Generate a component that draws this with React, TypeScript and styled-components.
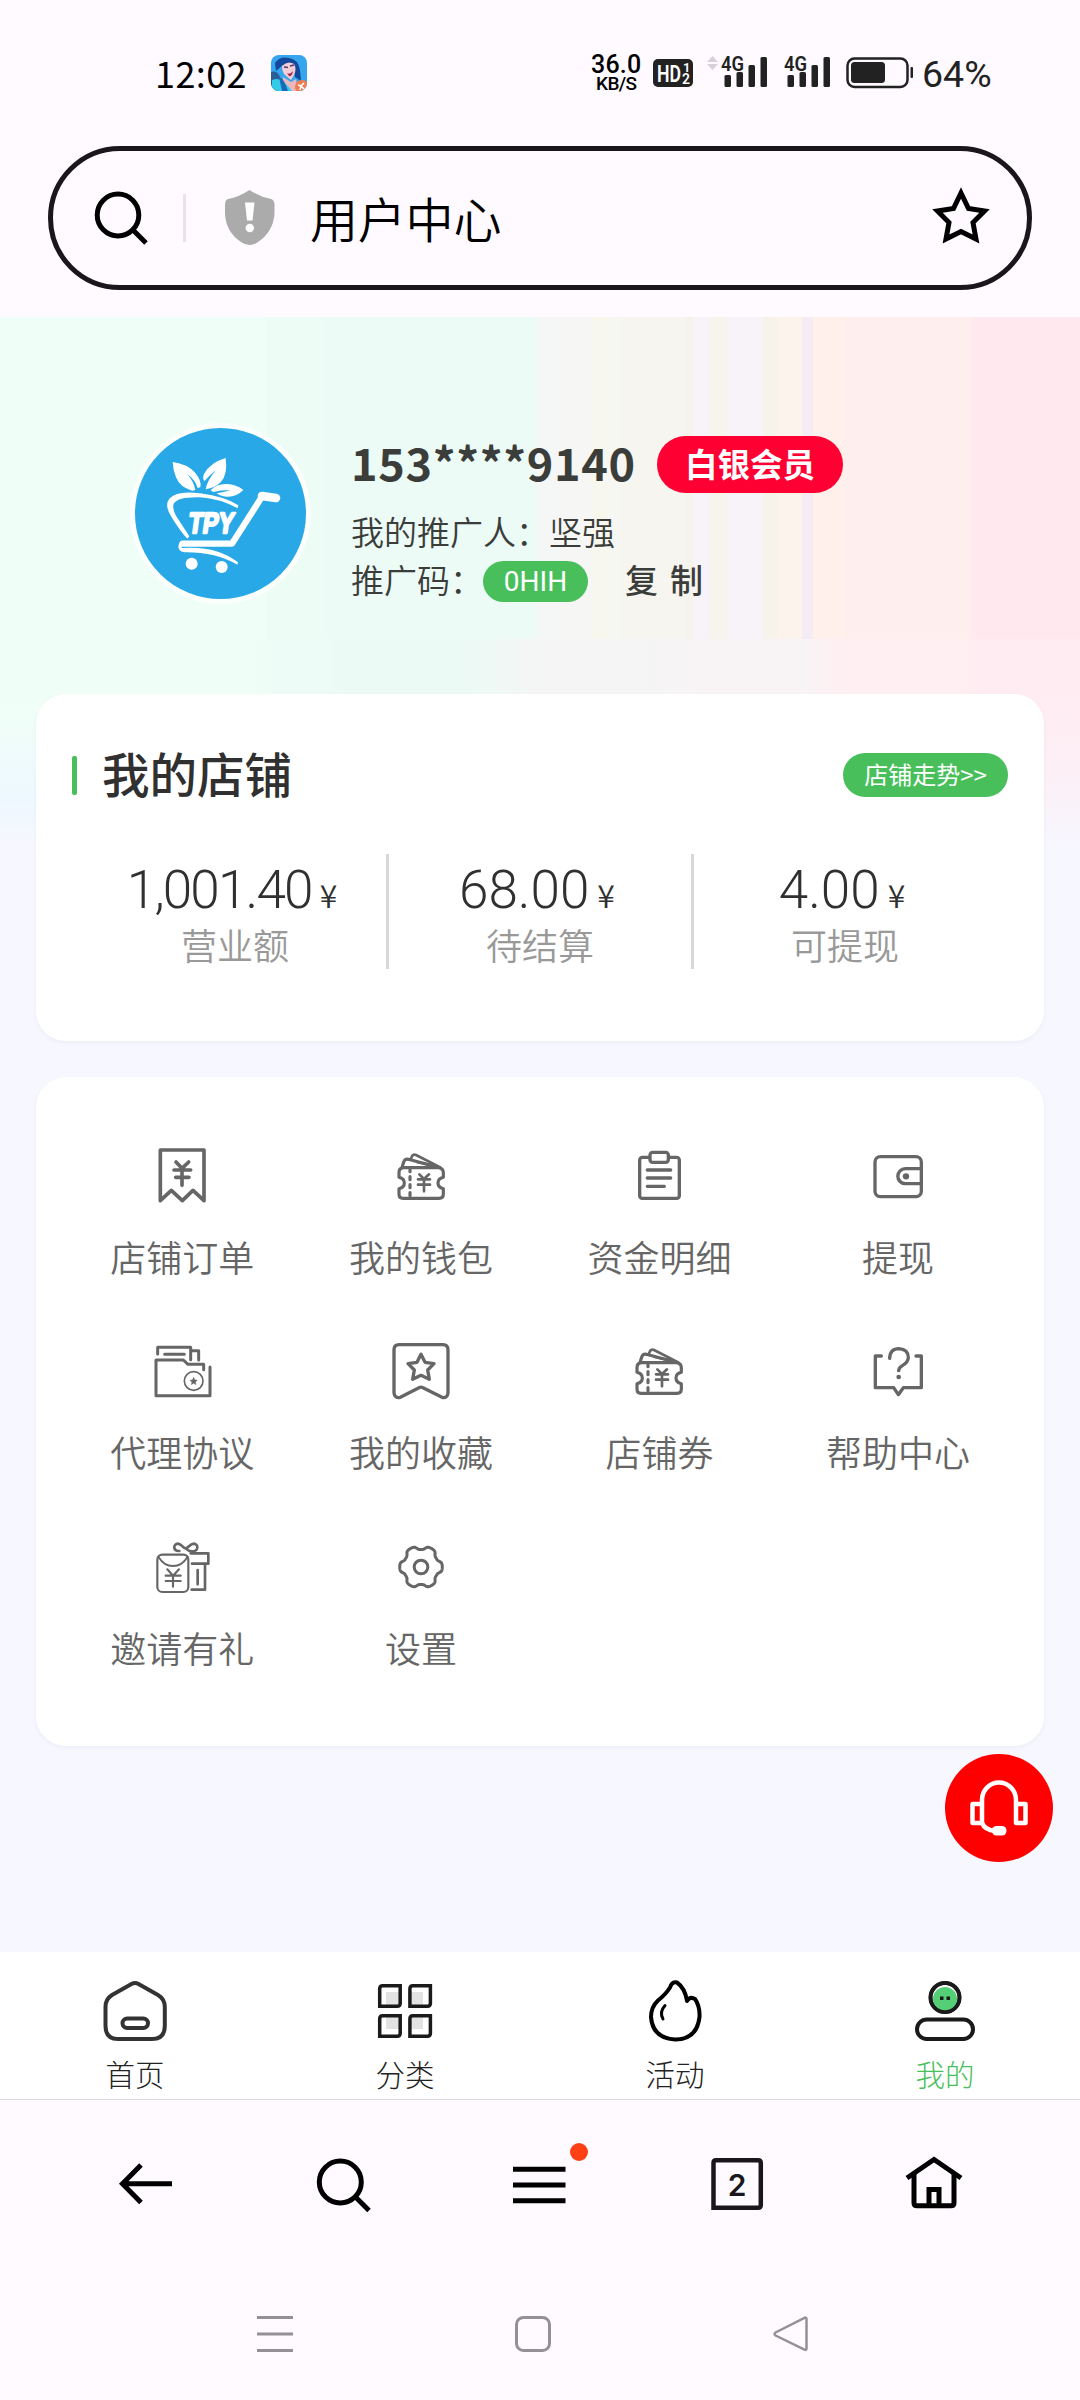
import React from "react";
import styled, { createGlobalStyle } from "styled-components";

const GREEN = "#48bf5b";
const CJK = '"Noto Sans CJK SC", "Noto Sans", sans-serif';
const LATIN = 'Roboto, "Noto Sans CJK SC", sans-serif';

const GlobalStyle = createGlobalStyle`
  * { box-sizing: border-box; }
  body { margin: 0; background: #fefaff; font-family: ${CJK}; }
  svg { display: block; overflow: visible; }
`;

const Screen = styled.div`
  width: 1080px;
  height: 2400px;
  display: flex;
  flex-direction: column;
  overflow: hidden;
  background: #fefaff;
`;

/* ---------- status bar ---------- */

const StatusBar = styled.header`
  height: 146px;
  padding: 0 88px 0 155px;
  display: flex;
  align-items: center;
`;

const Clock = styled.span`
  width: 116px;
  padding-bottom: 2px;
  font-size: 36px;
  font-weight: 400;
  line-height: 40px;
  letter-spacing: 0.4px;
  color: #000;
`;

const StatusCluster = styled.div`
  margin-left: auto;
  display: flex;
  align-items: center;
  color: #222;
`;

const NetSpeed = styled.div`
  width: 62px;
  font-family: ${LATIN};
  font-weight: 500;
  color: #000;
`;

const SpeedValue = styled.div`
  font-size: 25px;
  line-height: 20px;
  letter-spacing: 0.2px;
`;

const SpeedUnit = styled.div`
  padding-left: 5px;
  font-size: 19px;
  line-height: 17px;
  letter-spacing: -0.6px;
`;

const HdBadge = styled.div`
  width: 40px;
  height: 28px;
  margin-right: 12px;
  border-radius: 5px;
  background: #222;
`;

const Gap = styled.div<{ $w: number }>`
  width: ${(p) => p.$w}px;
`;

const Percent = styled.span`
  width: 70px;
  font-family: ${LATIN};
  font-size: 37.500px;
  line-height: 44px;
  color: #222;
  white-space: nowrap;
  padding-top: 2px;
`;

/* ---------- address bar ---------- */

const AddressBar = styled.div`
  width: 984px;
  height: 144px;
  margin: 0 48px 27px;
  padding: 0 34px 0 41px;
  flex: none;
  display: flex;
  align-items: center;
  border: 5px solid #19171c;
  border-radius: 72px;
`;

const BarDivider = styled.i`
  width: 3px;
  height: 48px;
  margin: 0 39px 0 35px;
  background: #e9e2e9;
`;

const PageTitle = styled.span`
  flex: 1;
  padding-left: 35px;
  padding-bottom: 3px;
  font-size: 48px;
  font-weight: 350;
  line-height: 56px;
  letter-spacing: -0.2px;
  color: #000;
`;

/* ---------- page content ---------- */

const Content = styled.main`
  position: relative;
  flex: 1;
  padding: 0 36px;
  background-color: #f7f7ff;
  background-repeat: no-repeat;
  background-image:
    linear-gradient(to bottom, rgba(234, 251, 255, 0), rgba(236, 249, 255, 0.95) 60%, rgba(247, 247, 255, 1)),
    linear-gradient(to bottom, rgba(247, 247, 255, 0) 377px, rgba(247, 247, 255, 0.3) 450px, #f7f7ff 535px),
    linear-gradient(to right,
      #effff7 0 250px, #edfcf6 275px 326px, #ecfaf6 340px 470px,
      #f5f5f5 540px 640px, #f8f4f6 700px 800px, #ffeff2 850px 950px, #ffecf2 980px),
    linear-gradient(to right,
      #effff7 0 265px, #eefcf6 265px 326px, #ecfbf6 326px 536px,
      #f5f6f6 536px 560px, #f6f7f4 560px 592px, #f7f7ee 592px 607px,
      #f6f6f2 607px 620px, #f6f5ef 620px 685px, #f5f4ec 685px 693px, #f8f2f9 693px 710px,
      #f6f5ed 710px 727px, #f7f3f9 727px 763px, #f6f3eb 763px 777px,
      #fdf3ed 777px 802px, #f5ebf3 802px 813px, #fff0eb 813px 845px,
      #ffeeee 845px 971px, #ffe9ee 971px);
  background-size: 36px 130px, 100% 535px, 100% 213px, 100% 322px;
  background-position: 0 400px, 0 0, 0 322px, 0 0;
`;

const Profile = styled.section`
  height: 377px;
  padding: 106px 0 0 94px;
  display: flex;
  align-items: flex-start;
`;

const Avatar = styled.div`
  width: 181px;
  height: 181px;
  border: 5px solid #fbfffd;
  border-radius: 50%;
  background: #29a8e8;
  overflow: hidden;
`;

const ProfileInfo = styled.div`
  padding: 13px 0 0 40px;
  color: #3b3d3b;
`;

const NameRow = styled.div`
  height: 57px;
  display: flex;
  align-items: center;
`;

const Phone = styled.span`
  width: 306px;
  font-size: 45px;
  font-weight: 700;
  line-height: 50px;
  letter-spacing: 0.700px;
  padding-bottom: 5px;
  white-space: nowrap;
`;

const LevelBadge = styled.span`
  width: 186px;
  height: 57px;
  border-radius: 29px;
  background: #ff0032;
  color: #fff;
  font-size: 32.500px;
  font-weight: 700;
  line-height: 54px;
  text-align: center;
`;

const InfoRow = styled.div<{ $top?: number }>`
  height: 48px;
  margin-top: ${(p) => p.$top ?? 0}px;
  display: flex;
  align-items: center;
  font-size: 33px;
  font-weight: 350;
  white-space: nowrap;
`;

const CodePill = styled.span`
  width: 105px;
  height: 41px;
  margin: 5px 37px 0 0;
  border-radius: 21px;
  background: ${GREEN};
  color: #fff;
  font-family: ${LATIN};
  font-size: 28px;
  font-weight: 400;
  line-height: 41px;
  text-align: center;
`;

const CopyButton = styled.span`
  font-weight: 500;
  font-size: 33px;
  letter-spacing: 12px;
`;

const Card = styled.section<{ $h: number; $pad: string; $top?: number }>`
  height: ${(p) => p.$h}px;
  padding: ${(p) => p.$pad};
  margin-top: ${(p) => p.$top ?? 0}px;
  border-radius: 30px;
  background: #fff;
  box-shadow: 0 2px 4px rgba(60, 60, 100, 0.05);
`;

const CardHeader = styled.div`
  height: 44px;
  padding: 0 36px;
  display: flex;
  align-items: center;
`;

const Accent = styled.i`
  width: 5px;
  height: 39px;
  border-radius: 2px;
  background: ${GREEN};
`;

const CardTitle = styled.h2`
  flex: 1;
  margin: 0 0 5px;
  padding-left: 25px;
  font-size: 47.500px;
  font-weight: 500;
  line-height: 50px;
  color: #303030;
`;

const TrendPill = styled.span`
  width: 165px;
  height: 44px;
  border-radius: 22px;
  background: ${GREEN};
  color: #fff;
  font-size: 24px;
  line-height: 42px;
  text-align: center;
`;

const Stats = styled.div`
  margin: 57px 0 0 45px;
  display: grid;
  grid-template-columns: repeat(3, 305px);
  height: 115px;
`;

const Stat = styled.div`
  padding-top: 9px;
  display: flex;
  flex-direction: column;
  align-items: center;
  border-left: 3px solid #d8d8d8;
  &:first-child { border-color: transparent; }
`;

const StatValue = styled.div<{ $track: number }>`
  display: flex;
  align-items: baseline;
  padding-right: 6px;
  margin-bottom: 7px;
  font-family: ${LATIN};
  font-size: 53px;
  font-weight: 300;
  line-height: 54px;
  letter-spacing: ${(p) => p.$track}px;
  color: #303030;
`;

const Yen = styled.small`
  margin-left: 8px;
  font-family: ${CJK};
  font-size: 32px;
  font-weight: 350;
  line-height: 40px;
  letter-spacing: 0;
`;

const StatLabel = styled.div`
  font-size: 36px;
  font-weight: 350;
  line-height: 40px;
  color: #999;
`;

const MenuGrid = styled.div`
  display: grid;
  grid-template-columns: repeat(4, 238.6px);
  row-gap: 59.3px;
`;

const MenuItem = styled.div`
  height: 136px;
  display: flex;
  flex-direction: column;
  align-items: center;
  justify-content: space-between;
  font-size: 36px;
  font-weight: 350;
  line-height: 40px;
  color: #666;
`;

const SupportButton = styled.button`
  position: absolute;
  left: 945px;
  top: 1437px;
  width: 108px;
  height: 108px;
  padding: 0;
  border: 0;
  border-radius: 50%;
  background: #ff0000;
`;

/* ---------- bottom bars ---------- */

const TabBar = styled.nav`
  height: 148px;
  flex: none;
  display: grid;
  grid-template-columns: repeat(4, 1fr);
  background: #fff;
  border-bottom: 1px solid #dddbe0;
`;

const Tab = styled.div<{ $active?: boolean }>`
  padding-top: 27px;
  display: flex;
  flex-direction: column;
  align-items: center;
  gap: 12px;
  font-size: 29.500px;
  font-weight: 300;
  line-height: 36px;
  color: ${(p) => (p.$active ? GREEN : "#222")};
`;

const BrowserBar = styled.nav`
  height: 168px;
  flex: none;
  padding: 0 47.5px;
  display: grid;
  grid-template-columns: repeat(5, 197px);
  place-items: center;
`;

const SystemBar = styled.nav`
  height: 132px;
  flex: none;
  padding: 0 146px;
  display: grid;
  grid-template-columns: repeat(3, 258px);
  place-items: center;
`;

/* ---------- icons ---------- */

type IconProps = { box: string; size?: number; sw?: number; color?: string; round?: boolean; children: React.ReactNode };

const Icon = ({ box, size = 72, sw = 10, color = "#666", round = true, children }: IconProps) => (
  <svg
    width={size}
    height={size}
    viewBox={box}
    fill="none"
    stroke={color}
    strokeWidth={sw}
    strokeLinecap={round ? "round" : "butt"}
    strokeLinejoin={round ? "round" : "miter"}
  >
    {children}
  </svg>
);

const OrderIcon = () => (
  <Icon box="196 60 216 216" sw={11}>
    <path d="M239 90H370V242L337 211L305 242L272 211L239 242Z" />
    <path d="M286 126L304 145L324 126M304 145V196M280 150H330M285 172H325" />
  </Icon>
);

const TicketIcon = () => (
  <Icon box="914 60 216 216" sw={9.5}>
    <path d="M968 143H1076Q1089 146 1089 158V172Q1073 176 1073 189Q1073 202 1089 206V222Q1089 235 1076 235H968Q956 235 956 222V206Q972 202 972 189Q972 176 956 172V158Q956 145 968 143Z" />
    <path d="M989 149V235" strokeDasharray="9 15" strokeDashoffset="3" />
    <path d="M966 139L971 124Q975 116 984 118L1074 142" />
    <path d="M991 117L996 107Q1000 102 1007 105L1080 142L1010 126" strokeWidth="8" />
    <path d="M1017 163L1031 177L1046 163M1031 177V214M1013 178H1049M1013 194H1049" strokeWidth="8" />
  </Icon>
);

const DetailIcon = () => (
  <Icon box="189 60 216 216">
    <rect x="239" y="112" width="119" height="123" rx="8" />
    <rect x="270" y="97" width="55" height="30" rx="8" fill="#fff" />
    <path d="M262 150H332M262 174H332M262 199H313" />
  </Icon>
);

const WithdrawIcon = () => (
  <Icon box="904 60 216 216">
    <rect x="943" y="110" width="139" height="120" rx="16" />
    <path d="M1080 146H1034A22.500 22.500 0 0 0 1034 191H1080" />
    <circle cx="1036" cy="169" r="9.500" fill="#666" stroke="none" />
  </Icon>
);

const AgreementIcon = () => (
  <Icon box="196 645 216 216" sw={9}>
    <path d="M308 720H226V827H388V741M308 720L322 733H369V749" />
    <path d="M231 702V682H330V719M330 692H354V720M252 703H311" />
    <circle cx="339" cy="783" r="28" strokeWidth="5" />
    <path
      d="M339 772L342.500 779.500L350 780.500L344.500 786L346 794L339 790L332 794L333.500 786L328 780.500L335.500 779.500Z"
      fill="#666"
      strokeWidth="1"
    />
  </Icon>
);

const FavoriteIcon = () => (
  <Icon box="914 645 216 216">
    <path d="M956 674H1088Q1103 674 1103 690V819Q1101 836 1085 832L1028 803Q1022 800 1016 803L960 832Q943 836 941 819V690Q941 674 956 674Z" />
    <path d="M1022 703L1034 727L1061 731L1042 750L1047 778L1022 766L997 778L1002 750L983 731L1010 727Z" />
  </Icon>
);

const HelpIcon = () => (
  <Icon box="904 645 216 216">
    <path d="M962 708H944V803H999L1013 824L1028 803H1082V708H1066" />
    <path d="M987 715Q988 686 1015 686Q1043 688 1043 713Q1042 727 1026 736Q1014 743 1014 752" />
    <circle cx="1014" cy="771" r="7" fill="#666" stroke="none" />
  </Icon>
);

const InviteIcon = () => (
  <Icon box="196 92 216 216" sw={8}>
    <path d="M296 152C276 153 277 130 292 130C303 131 308 144 315 144C322 144 327 131 339 130C354 130 355 153 334 153C325 153 320 149 315 144" />
    <path d="M330 159H383V190H334" />
    <path d="M373 191V268H333M351 209V252" />
    <rect x="230" y="163" width="93" height="112" rx="15" strokeWidth="6.500" />
    <path d="M233 169Q250 197 277 197Q304 197 321 169" strokeWidth="5.500" />
    <path d="M260 207L277 226L295 207M277 226V259M255 226H300M255 242H300" strokeWidth="6.500" />
  </Icon>
);

const gearPoints = Array.from({ length: 180 }, (_, i) => {
  const a = (i * Math.PI) / 90;
  const r = 58 + 6 * Math.tanh(1.8 * Math.cos(6 * a) + 0.3);
  return `${(1022 + r * Math.cos(a)).toFixed(1)},${(200 + r * Math.sin(a)).toFixed(1)}`;
}).join(" ");

const SettingsIcon = () => (
  <Icon box="914 92 216 216" sw={9}>
    <polygon points={gearPoints} />
    <circle cx="1022" cy="200" r="20.500" />
  </Icon>
);

const GameIcon = () => (
  <svg width="36" height="36" viewBox="0 0 36 36">
    <defs>
      <clipPath id="game">
        <rect width="36" height="36" rx="8" />
      </clipPath>
    </defs>
    <g clipPath="url(#game)">
      <rect width="36" height="36" fill="#35a5ee" />
      <path d="M0 17Q6 15 9 22L8 36H0Z" fill="#2b5f96" />
      <path d="M4 8Q9 1 18 3Q27 4 29 15L30 26L24 22L22 8L12 10L5 16Z" fill="#14489c" />
      <path d="M11 11Q17 5 23 9Q26 14 23 20L20 25L14 20Q11 17 11 11Z" fill="#f3cdd5" />
      <path d="M13 12L17 12.500M19 11L23 10" stroke="#53376e" strokeWidth="1.500" />
      <path d="M16 18Q19 20 22 16Q21 22 18 21Z" fill="#a02444" />
      <path d="M12 22L20 27L25 24L27 36H12Z" fill="#e9b7bd" />
      <path d="M1 25Q8 22 13 27T21 36H1Z" fill="#33cbe8" />
      <path d="M8 22Q13 23 17 36H11Z" fill="#1769ba" />
      <circle cx="31" cy="32" r="7" fill="#f37b4d" />
      <path d="M27 30L30 31L33 28M29 35L30 31L33 34" stroke="#fff" strokeWidth="1.600" fill="none" />
    </g>
  </svg>
);

const Bars = ({ x }: { x: number }) => (
  <g fill="#222">
    <rect x={x} y="75" width="6.500" height="12" rx="1.500" />
    <rect x={x + 12} y="72" width="6.500" height="15" rx="1.500" />
    <rect x={x + 24} y="65" width="6.500" height="22" rx="1.500" />
    <rect x={x + 36} y="57" width="6.500" height="30" rx="1.500" />
    <text x={x - 3.5} y="70.500" fontFamily="Roboto" fontSize="21" fontWeight="600" textLength="23" lengthAdjust="spacingAndGlyphs">
      4G
    </text>
  </g>
);

const Logo = () => (
  <svg width="171" height="171" viewBox="105 84 513 513" fill="none" stroke="#fff" strokeLinecap="round" strokeLinejoin="round">
    <g fill="#fff" stroke="none">
      <path d="M218 186Q262 192 284 217Q306 242 301 262L293 264Q286 240 262 222Q282 246 286 270L276 272Q240 262 228 232Q219 210 218 186Z" />
      <path d="M377 174Q384 224 362 247Q344 264 317 268Q322 240 348 210Q322 232 314 243Q306 236 312 222Q330 188 377 174Z" />
      <path d="M332 271Q350 251 380 252Q410 254 430 270Q408 292 380 290Q360 289 350 280Q370 277 392 270Q360 270 340 276Z" />
      <path d="M413 325Q360 296 300 292Q235 290 222 310Q215 322 228 347L268 409L262 416Q238 390 214 350Q192 316 208 296Q232 270 300 280Q376 290 415 316Z" />
      <path d="M246 444Q350 436 414 487L412 494Q345 456 255 457Q236 455 235 440Q236 424 250 422L252 430Q240 436 246 444Z" />
    </g>
    <path d="M248 431H396L488 287" strokeWidth="19" />
    <path d="M486 288L528 294" strokeWidth="26" />
    <circle cx="275" cy="491" r="18" fill="#fff" stroke="none" />
    <circle cx="365" cy="501" r="18" fill="#fff" stroke="none" />
    <g transform="translate(0 401) skewX(-8) translate(0 -401)">
      <text
        x="262"
        y="399"
        fill="#fff"
        strokeWidth="7"
        fontFamily="Liberation Sans"
        fontWeight="700"
        fontSize="88"
        textLength="136"
        lengthAdjust="spacingAndGlyphs"
      >
        TPY
      </text>
    </g>
  </svg>
);

const HeadsetIcon = () => (
  <svg width="108" height="108" viewBox="945 1754 108 108" fill="none" stroke="#fff" strokeWidth="4.500" strokeLinejoin="round">
    <rect x="972.500" y="1804" width="9.500" height="19" />
    <rect x="1016" y="1804" width="9.500" height="19" />
    <path d="M982 1804V1800A17 17.500 0 0 1 1016 1800V1804" />
    <path d="M982 1823Q985 1830 995 1831" />
    <rect x="992" y="1826" width="14.500" height="9.500" rx="4.500" fill="#fff" stroke="none" />
  </svg>
);

const menu: [string, () => React.ReactElement][] = [
  ["店铺订单", OrderIcon],
  ["我的钱包", TicketIcon],
  ["资金明细", DetailIcon],
  ["提现", WithdrawIcon],
  ["代理协议", AgreementIcon],
  ["我的收藏", FavoriteIcon],
  ["店铺券", TicketIcon],
  ["帮助中心", HelpIcon],
  ["邀请有礼", InviteIcon],
  ["设置", SettingsIcon],
];

const stats: [string, string, number][] = [
  ["1,001.40", "营业额", -1.8],
  ["68.00", "待结算", 0],
  ["4.00", "可提现", 0],
];

const tile = (x: number, y: number) =>
  `M${x + 3} ${y}H${x + 20.5}V${y + 17.5}Q${x + 20.5} ${y + 20.5} ${x + 17.5} ${y + 20.5}H${x}V${y + 3}Q${x} ${y} ${x + 3} ${y}Z`;

export default function App() {
  return (
    <Screen>
      <GlobalStyle />
      <StatusBar>
        <Clock>12:02</Clock>
        <GameIcon />
        <StatusCluster>
          <NetSpeed>
            <SpeedValue>36.0</SpeedValue>
            <SpeedUnit>KB/S</SpeedUnit>
          </NetSpeed>
          <HdBadge>
            <svg width="40" height="28" viewBox="0 0 40 28" fill="#fff" fontFamily="Roboto" fontWeight="600">
              <text x="4" y="22.500" fontSize="23" textLength="24" lengthAdjust="spacingAndGlyphs">HD</text>
              <text x="30" y="13" fontSize="13">1</text>
              <text x="29" y="25" fontSize="14">2</text>
            </svg>
          </HdBadge>
          <svg width="64" height="36" viewBox="705 55 64 36">
            <path d="M707 62L712.500 56L718 62ZM707 64L712.500 70L718 64Z" fill="#d8cfd8" />
            <Bars x={724.5} />
          </svg>
          <Gap $w={14} />
          <svg width="48" height="36" viewBox="783 55 48 36">
            <Bars x={787.5} />
          </svg>
          <Gap $w={15} />
          <svg width="68" height="36" viewBox="846 55 68 36">
            <rect x="847.500" y="58.500" width="60" height="28.500" rx="7" fill="none" stroke="#222" strokeWidth="2.500" />
            <rect x="851" y="62" width="34" height="21" rx="3.500" fill="#222" />
            <rect x="910.500" y="67" width="2.500" height="11" rx="1" fill="#222" />
          </svg>
          <Gap $w={8} />
          <Percent>64%</Percent>
        </StatusCluster>
      </StatusBar>

      <AddressBar>
        <Icon box="94 192 54 54" size={54} sw={5} color="#000" round={false}>
          <ellipse cx="118" cy="216" rx="20.800" ry="21" />
          <path d="M132 230L146 244" />
        </Icon>
        <BarDivider />
        <svg width="50" height="56" viewBox="225 190 50 56">
          <path d="M249.500 190Q260 197 271 199Q274.500 200 274.500 205V214Q273 232 258 242Q249.500 248 241 242Q226 232 225 214V205Q225 200 228 199Q239 197 249.500 190Z" fill="#ababab" />
          <path d="M245 202.500H254.500L252.500 220.500H247Z" fill="#fff" />
          <circle cx="249.800" cy="228" r="4.200" fill="#fff" />
        </svg>
        <PageTitle>用户中心</PageTitle>
        <Icon box="929 187 64 64" size={64} sw={5} color="#000" round={false}>
          <path d="M961 194L968.500 209.500L984.500 212L973 223.500L976 240L961 232.500L946 240L949 223.500L937.500 212L953.500 209.500Z" />
        </Icon>
      </AddressBar>

      <Content>
        <Profile>
          <Avatar>
            <Logo />
          </Avatar>
          <ProfileInfo>
            <NameRow>
              <Phone>153****9140</Phone>
              <LevelBadge>白银会员</LevelBadge>
            </NameRow>
            <InfoRow $top={14}>我的推广人：坚强</InfoRow>
            <InfoRow>
              推广码：
              <CodePill>0HIH</CodePill>
              <CopyButton>复制</CopyButton>
            </InfoRow>
          </ProfileInfo>
        </Profile>

        <Card $h={347} $pad="59px 0 0">
          <CardHeader>
            <Accent />
            <CardTitle>我的店铺</CardTitle>
            <TrendPill>店铺走势&gt;&gt;</TrendPill>
          </CardHeader>
          <Stats>
            {stats.map(([value, label, track]) => (
              <Stat key={label}>
                <StatValue $track={track}>
                  {value}
                  <Yen>¥</Yen>
                </StatValue>
                <StatLabel>{label}</StatLabel>
              </Stat>
            ))}
          </Stats>
        </Card>

        <Card $h={669} $pad="63px 26px 0 27px" $top={36}>
          <MenuGrid>
            {menu.map(([label, Glyph]) => (
              <MenuItem key={label}>
                <Glyph />
                {label}
              </MenuItem>
            ))}
          </MenuGrid>
        </Card>

        <SupportButton aria-label="客服">
          <HeadsetIcon />
        </SupportButton>
      </Content>

      <TabBar>
        <Tab>
          <Icon box="103 1979 64 64" size={64} sw={4} color="#333">
            <path d="M131.500 1984Q135 1982 138.500 1984L158 1995Q164.800 1999 164.800 2007V2026Q164.800 2039 152 2039H118Q105.500 2039 105.500 2026V2007Q105.500 1999 112 1995Z" />
            <rect x="122.500" y="2018.500" width="25.500" height="9.500" rx="4.700" />
          </Icon>
          首页
        </Tab>
        <Tab>
          <Icon box="373 1979 64 64" size={64} sw={3.5} color="#1a1a1a" round={false}>
            <path d="M386 1992H400V2006H386ZM409 1992H423V2006H409ZM386 2017H400V2029H386ZM409 2017H423V2029H409Z" fill="#e3e3e3" stroke="none" />
            <path d={tile(379.7, 1985.7)} />
            <path d={tile(409.9, 1985.7)} />
            <path d={tile(379.7, 2015.8)} />
            <path d={tile(409.9, 2015.8)} />
          </Icon>
          分类
        </Tab>
        <Tab>
          <Icon box="643 1979 64 64" size={64} sw={4} color="#000">
            <path d="M670 1987.500Q672 1981 677 1982.500Q685 1988 687 2001Q690 1996 695 1999Q700 2006 699.500 2017Q697 2039.500 675 2039.500Q652.500 2038 651 2017Q651 2007 658 2000.500Q666 1994 670 1987.500Z" />
            <path d="M665 2005.500Q659 2012 663 2019" strokeWidth="3" />
          </Icon>
          活动
        </Tab>
        <Tab $active>
          <Icon box="913 1979 64 64" size={64} sw={4} color="#1a1a1a">
            <circle cx="945" cy="1997.500" r="14.500" fill="#fff" />
            <circle cx="945" cy="1999" r="12" fill="#54cf76" stroke="none" />
            <circle cx="945" cy="1997.500" r="14.500" strokeWidth="3.500" />
            <path d="M940 1996.500H943.500V2000H940ZM946.500 1996.500H950V2000H946.500Z" fill="#1a1a1a" stroke="none" />
            <rect x="917" y="2019.500" width="56" height="19.500" rx="9.700" />
          </Icon>
          我的
        </Tab>
      </TabBar>

      <BrowserBar>
        <Icon box="114 2152 64 64" size={64} sw={5} color="#000" round={false}>
          <path d="M141 2165L122.500 2183.700L141 2202.500M122.500 2183.700H172" />
        </Icon>
        <Icon box="311 2152 64 64" size={64} sw={5} color="#000" round={false}>
          <circle cx="340.300" cy="2182" r="21" />
          <path d="M355 2196.500L369 2210.500" />
        </Icon>
        <Icon box="508 2152 64 64" size={64} sw={5} color="#000" round={false}>
          <path d="M513 2169.300H565.500M513 2185H565.500M513 2200.700H565.500" />
          <circle cx="579" cy="2152" r="9" fill="#ff4017" stroke="none" />
        </Icon>
        <Icon box="705 2152 64 64" size={64} sw={4.5} color="#19171c" round={false}>
          <path d="M716 2160.300H758Q760.800 2160.300 760.800 2163V2205Q760.800 2207.800 758 2207.800H713.500V2163Q713.500 2160.300 716 2160.300Z" />
          <text x="737" y="2195.500" textAnchor="middle" fontFamily="Inter, Roboto, sans-serif" fontWeight="600" fontSize="30" fill="#19171c" stroke="none">
            2
          </text>
        </Icon>
        <Icon box="902 2152 64 64" size={64} sw={5} color="#000" round={false}>
          <path d="M907 2178L934 2159.500L961 2178" />
          <path d="M914 2173V2203Q914 2205.800 917 2205.800H951Q954 2205.800 954 2203V2173" />
          <path d="M929 2206V2189.500H939V2206" />
        </Icon>
      </BrowserBar>

      <SystemBar>
        <Icon box="255 2314 40 40" size={40} sw={3} color="#949096" round={false}>
          <path d="M257 2317.500H293M257 2334H293M257 2350.500H293" />
        </Icon>
        <Icon box="513 2314 40 40" size={40} sw={3} color="#949096">
          <rect x="516.500" y="2317.500" width="33" height="33" rx="7" />
        </Icon>
        <Icon box="771 2314 40 40" size={40} sw={3} color="#949096">
          <path d="M804.500 2317.800Q806.500 2317 806.500 2319V2348.500Q806.500 2350.500 804.500 2349.700L775.500 2335.500Q773.500 2334 775.500 2332.500Z" strokeWidth="2.500" />
        </Icon>
      </SystemBar>
    </Screen>
  );
}
